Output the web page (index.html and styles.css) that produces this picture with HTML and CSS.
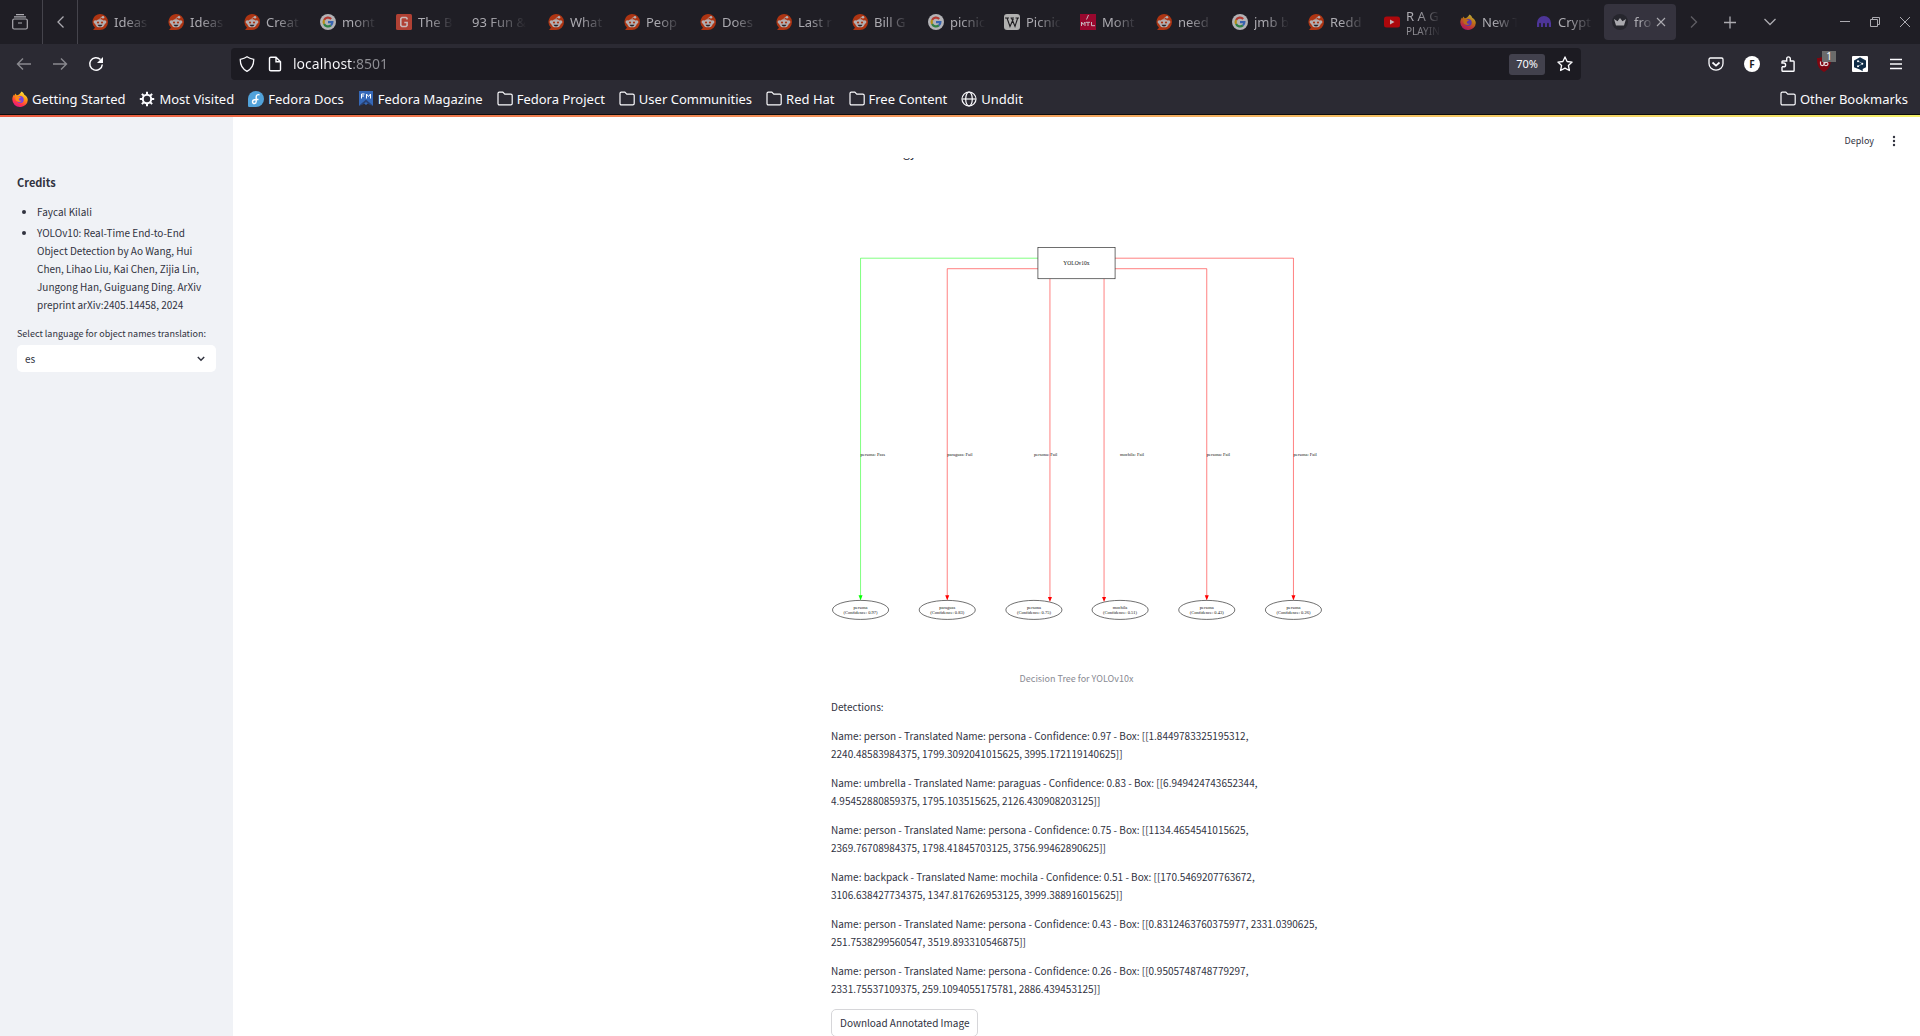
FILE: index.html
```html
<!DOCTYPE html>
<html lang="en">
<head>
<meta charset="utf-8">
<title>YOLOv10 Object Detection</title>
<link rel="stylesheet" href="styles.css">
</head>
<body>
<svg class="sprite" aria-hidden="true">
  <symbol id="reddit" viewBox="0 0 16 16">
    <path d="M8 0a8 8 0 1 1 0 16H1l2-2.200A8 8 0 0 1 8 0z" fill="#ad3412"/>
    <circle cx="3.300" cy="8" r="1.700" fill="#b4aeb0"/><circle cx="12.700" cy="8" r="1.700" fill="#b4aeb0"/>
    <ellipse cx="8" cy="9.300" rx="4.900" ry="4" fill="#b4aeb0"/>
    <circle cx="11" cy="3.300" r="1.300" fill="#b4aeb0"/>
    <path d="M8 5.500c0-1.500.8-2.200 2.200-2.200" fill="none" stroke="#b4aeb0" stroke-width=".8"/>
    <circle cx="6" cy="8.500" r="1.100" fill="#ad3412"/><circle cx="10" cy="8.500" r="1.100" fill="#ad3412"/>
    <path d="M5.600 10.700h4.800c-.4 1.200-1.200 1.700-2.400 1.700s-2-.5-2.400-1.700z" fill="#252329"/>
  </symbol>
  <symbol id="google" viewBox="0 0 16 16">
    <circle cx="8" cy="8" r="8" fill="#b3b3b6"/>
    <g fill="none" stroke-width="2.200">
      <path d="M11.200 4.900A4.400 4.400 0 0 0 4.100 6" stroke="#b23a31"/>
      <path d="M4.100 6a4.400 4.400 0 0 0 0 4" stroke="#b48d16"/>
      <path d="M4.100 10a4.400 4.400 0 0 0 6.800 1.400" stroke="#2f8044"/>
      <path d="M8 8.100h4.400c0 1.500-.5 2.500-1.500 3.300" stroke="#3764b0"/>
    </g>
  </symbol>
  <symbol id="firefox" viewBox="0 0 16 16">
    <path d="M9.500.5c1.700 1 2.400 2.200 2.800 3.200 2.100 1.200 3.500 3 3.500 5.200A7.400 7.400 0 0 1 8 16 7.600 7.600 0 0 1 .3 8.600C.3 6.500 1 4.800 2 3.500l.5 1.200.7-2.300L4.800 4.300C6.500 4.200 8.200 2.800 9.500.5z" fill="url(#flame)"/>
    <circle cx="8.200" cy="8.500" r="3.500" fill="#7542e5"/>
    <path d="M3.600 5.200c2.600-.5 4 .7 5.400 1.500-1.400.2-2.200.7-2.200 1.500 0 1.300 1.600 2 3.200 1.400-1 2-5.800 1.800-6.600-1.300z" fill="#ff8a17"/>
  </symbol>
  <linearGradient id="flame" x1=".8" y1="0" x2=".3" y2="1">
    <stop offset="0" stop-color="#fff44f"/><stop offset=".4" stop-color="#ff980e"/><stop offset=".75" stop-color="#ff3647"/><stop offset="1" stop-color="#e31587"/>
  </linearGradient>
  <symbol id="folder" viewBox="0 0 16 16">
    <path d="M1 12.500v-10C1 1.700 1.600 1.200 2.300 1.200h3.500l2 2h6c.8 0 1.400.6 1.400 1.300v8c0 .8-.6 1.300-1.400 1.300H2.300C1.600 13.800 1 13.300 1 12.500z" fill="none" stroke="currentColor" stroke-width="1.200"/>
  </symbol>
</svg>

<header class="browser">
  <div class="tabstrip">
    <button class="firefox-view" aria-label="Recent browsing"><svg class="icon16" viewBox="0 0 16 16" fill="none" stroke="currentColor" stroke-width="1.200"><rect x=".7" y="5" width="14.600" height="10" rx="1.500"/><path d="M2 2.800h12M4 .7h8M6 9h4"/></svg></button>
    <button class="tab-scroll" aria-label="Scroll tabs left"><svg class="icon16" viewBox="0 0 16 16" fill="none" stroke="currentColor" stroke-width="1.300"><path d="M11.500 2.500L6 8l5.500 5.500"/></svg></button>
    <nav class="tabs" aria-label="Tabs">
      <button class="tab"><svg class="icon16"><use href="#reddit"/></svg><span class="tab-text">Ideas</span></button>
      <button class="tab"><svg class="icon16"><use href="#reddit"/></svg><span class="tab-text">Ideas</span></button>
      <button class="tab"><svg class="icon16"><use href="#reddit"/></svg><span class="tab-text">Creat</span></button>
      <button class="tab"><svg class="icon16"><use href="#google"/></svg><span class="tab-text">mont</span></button>
      <button class="tab"><svg class="icon16" viewBox="0 0 16 16"><rect width="16" height="16" rx="1.500" fill="#b04134"/><path d="M11 5.500V4.400L10 3.500H6L4.800 4.700v6.600L6 12.500h4l1.100-1.100V8.500H8.300" fill="none" stroke="#c9b8b8" stroke-width="1.600"/></svg><span class="tab-text">The B</span></button>
      <button class="tab"><span class="tab-text tab-text-wide">93 Fun &amp;</span></button>
      <button class="tab"><svg class="icon16"><use href="#reddit"/></svg><span class="tab-text">What</span></button>
      <button class="tab"><svg class="icon16"><use href="#reddit"/></svg><span class="tab-text">Peop</span></button>
      <button class="tab"><svg class="icon16"><use href="#reddit"/></svg><span class="tab-text">Does</span></button>
      <button class="tab"><svg class="icon16"><use href="#reddit"/></svg><span class="tab-text">Last r</span></button>
      <button class="tab"><svg class="icon16"><use href="#reddit"/></svg><span class="tab-text">Bill G</span></button>
      <button class="tab"><svg class="icon16"><use href="#google"/></svg><span class="tab-text">picnic</span></button>
      <button class="tab"><svg class="icon16" viewBox="0 0 16 16"><rect width="16" height="16" rx="3" fill="#b0b0b0"/><path d="M1 4h4M6.500 4h3.500M11.500 4H15M3 4l3 8.500L9.300 5M7.500 4l3.500 8.500L13.700 4" fill="none" stroke="#1d1c20" stroke-width="1.100"/></svg><span class="tab-text">Picnic</span></button>
      <button class="tab"><svg class="icon16" viewBox="0 0 16 16"><rect width="16" height="16" fill="#98082e"/><path d="M8.500 1L6.500 5.500M1.500 12V8l1.800 2.500L5 8v4M6 8.300h4M8 8.300V12M11.500 8v3.700H15" fill="none" stroke="#c9b8c0" stroke-width="1"/></svg><span class="tab-text">Mont</span></button>
      <button class="tab"><svg class="icon16"><use href="#reddit"/></svg><span class="tab-text">need l</span></button>
      <button class="tab"><svg class="icon16"><use href="#google"/></svg><span class="tab-text">jmb b</span></button>
      <button class="tab"><svg class="icon16"><use href="#reddit"/></svg><span class="tab-text">Redd</span></button>
      <button class="tab"><svg class="icon16" viewBox="0 0 16 16"><rect y="2.500" width="16" height="11" rx="2.500" fill="#ad080c"/><path d="M6 5.500v5L10.500 8z" fill="#c4b4b8"/></svg><span class="tab-text">R A G<small class="playing">PLAYIN</small></span></button>
      <button class="tab"><svg class="icon16 dim"><use href="#firefox"/></svg><span class="tab-text">New T</span></button>
      <button class="tab"><svg class="icon16" viewBox="0 0 16 16"><path d="M1 13V9a7 7 0 0 1 14 0v4h-2.200V9.500a1 1 0 0 0-1.700 0V13H8.900V9.500a1 1 0 0 0-1.800 0V13H4.900V9.500a1 1 0 0 0-1.700 0V13z" fill="#4d3598"/></svg><span class="tab-text">Crypt</span></button>
      <button class="tab tab-current"><svg class="icon16" viewBox="0 0 16 16"><circle cx="8" cy="8" r="8" fill="#26262d"/><path d="M2 5l3.500 2.200L8 4l2.500 3.200L14 5l-2 6.500H4z" fill="#aaa9ae"/></svg><span class="tab-text tab-text-short">fro</span><svg class="tab-close" viewBox="0 0 10 10"><path d="M1 1l8 8M9 1L1 9" stroke="currentColor" stroke-width="1.100"/></svg></button>
    </nav>
    <button class="strip-button faint" aria-label="Scroll tabs right"><svg class="icon16" viewBox="0 0 16 16" fill="none" stroke="currentColor" stroke-width="1.300"><path d="M5 2.500L10.500 8 5 13.500"/></svg></button>
    <button class="strip-button" aria-label="New tab"><svg class="icon16" viewBox="0 0 16 16" stroke="currentColor" stroke-width="1.300"><path d="M2 8.500h12M8 2.500v12"/></svg></button>
    <button class="strip-button" aria-label="List all tabs"><svg class="icon16" viewBox="0 0 16 16" fill="none" stroke="currentColor" stroke-width="1.300"><path d="M2.500 5L8 10.500 13.500 5"/></svg></button>
    <div class="window-controls">
      <button aria-label="Minimize"><svg class="icon12" viewBox="0 0 12 12" stroke="currentColor"><path d="M1 5.500h10"/></svg></button>
      <button aria-label="Restore"><svg class="icon12" viewBox="0 0 12 12" fill="none" stroke="currentColor"><path d="M1.500 3.500h7v7h-7zM3.500 3V1.500h7v7H9"/></svg></button>
      <button aria-label="Close"><svg class="icon12" viewBox="0 0 12 12" stroke="currentColor"><path d="M1 1l10 10M11 1L1 11"/></svg></button>
    </div>
  </div>

  <div class="toolbar">
    <button class="tool faint" aria-label="Back"><svg class="icon16" viewBox="0 0 16 16" fill="none" stroke="currentColor" stroke-width="1.400"><path d="M15 8H1.500M7 2.500L1.500 8 7 13.500"/></svg></button>
    <button class="tool faint" aria-label="Forward"><svg class="icon16" viewBox="0 0 16 16" fill="none" stroke="currentColor" stroke-width="1.400"><path d="M1 8h13.500M9 2.500L14.500 8 9 13.500"/></svg></button>
    <button class="tool" aria-label="Reload"><svg class="icon16" viewBox="0 0 16 16"><path d="M12.500 3.500A6.300 6.300 0 1 0 14.300 8.500" fill="none" stroke="currentColor" stroke-width="1.500"/><path d="M15 1v6H9z" fill="currentColor"/></svg></button>
    <div class="urlbar">
      <svg class="icon16" viewBox="0 0 16 16" fill="none" stroke="currentColor" stroke-width="1.300"><path d="M8 .8C6 2.300 3.800 2.900 1.300 3.300c-.2 5.200 1.700 9.500 6.700 12 5-2.500 6.900-6.800 6.700-12C12.200 2.900 10 2.300 8 .8z"/></svg>
      <svg class="icon16" viewBox="0 0 16 16" fill="none" stroke="currentColor" stroke-width="1.400"><path d="M2.500 13.500v-11c0-.8.500-1.300 1.300-1.300H9l4.500 4.500v7.800c0 .8-.5 1.300-1.300 1.300H3.800c-.8 0-1.300-.5-1.300-1.300zM9 1.500v4.200h4.500"/></svg>
      <input class="url" type="text" value="localhost:8501" aria-label="Address">
      <button class="zoom-level">70%</button>
      <svg class="icon16" viewBox="0 0 16 16" fill="none" stroke="currentColor" stroke-width="1.300" stroke-linejoin="round"><path d="M8 .9l2.100 4.600 5 .6-3.700 3.400 1 5L8 12.100l-4.400 2.400 1-5L.9 6.100l5-.6z"/></svg>
    </div>
    <div class="extensions">
      <button class="tool" aria-label="Pocket"><svg class="icon16" viewBox="0 0 16 16" fill="none" stroke="currentColor" stroke-width="1.300"><path d="M1 3.500C1 2.700 1.600 2 2.400 2h11.200c.8 0 1.400.7 1.400 1.500V7.500a7 6.700 0 0 1-14 0z"/><path d="M4.500 6.500L8 9.700l3.500-3.200" stroke-width="1.700"/></svg></button>
      <button class="tool" aria-label="Account"><span class="avatar">F</span></button>
      <button class="tool" aria-label="Extensions"><svg class="icon16" viewBox="0 0 16 16" fill="none" stroke="currentColor" stroke-width="1.400"><path d="M2 10.800V14.500c0 .5.300.8.800.8h10.500c.5 0 .8-.3.800-.8V5.800c0-.5-.3-.8-.8-.8H10.300V2.700a1.800 1.800 0 0 0-3.600 0V5H2.800c-.5 0-.8.300-.8.800V7h1.700a1.900 1.900 0 0 1 0 3.800H2"/></svg></button>
      <button class="tool tool-badged" aria-label="Content blocker"><svg class="icon16" viewBox="0 0 16 16"><path d="M8 0c2 1.500 4.500 2 7 2 0 7-1.500 11-7 14C2.500 13 1 9 1 2c2.500 0 5-.5 7-2z" fill="#800610"/><path d="M4.500 5.500v2.600c0 2 3.500 2 3.500 0V5.500v2.600c0 2 4 2 4 0S9.200 5.800 8.500 7.500" fill="none" stroke="#e8dcdc" stroke-width="1.200"/></svg><span class="badge">1</span></button>
      <button class="tool" aria-label="Translate"><svg class="icon16" viewBox="0 0 16 16"><rect width="16" height="16" rx="1" fill="#fff"/><path d="M8 1.200l6 3.300v6.800L10.700 13v2.200L7.800 13.500 2 11.300V4.500z" fill="#0f2b46"/><path d="M6 5l4.500 2.700L6 10.300" fill="none" stroke="#8fa3b4" stroke-width=".8"/><circle cx="6" cy="5.200" r="1" fill="#fff"/><circle cx="10.300" cy="7.700" r="1" fill="#fff"/><circle cx="6" cy="10.200" r="1" fill="#fff"/></svg></button>
      <button class="tool" aria-label="Menu"><svg class="icon16" viewBox="0 0 16 16" stroke="currentColor" stroke-width="1.300"><path d="M2 3.500h12M2 8h12M2 12.500h12"/></svg></button>
    </div>
  </div>

  <nav class="bookmarks" aria-label="Bookmarks">
    <a href="#"><svg class="icon16"><use href="#firefox"/></svg>Getting Started</a>
    <a href="#"><svg class="icon16" viewBox="0 0 16 16" fill="none" stroke="currentColor"><circle cx="8" cy="8" r="4.200" stroke-width="2"/><path d="M8 .8v3M8 12.200v3M.8 8h3M12.200 8h3M2.900 2.900L5 5M11 11l2.100 2.100M2.900 13.100L5 11M11 5l2.100-2.100" stroke-width="2"/></svg>Most Visited</a>
    <a href="#"><svg class="icon16" viewBox="0 0 16 16"><path d="M8 0a8 8 0 1 1 0 16H1.500C.5 16 0 15.500 0 14.500V8a8 8 0 0 1 8-8z" fill="#51a2da"/><path d="M11.500 3.800C9.500 3.200 8.200 4.200 8.200 6v4.500c0 2.500-3.700 2.700-3.700.3 0-1.800 1.500-2.300 3.700-2.300h2.300" fill="none" stroke="#fff" stroke-width="1.400"/></svg>Fedora Docs</a>
    <a href="#"><svg class="icon16" viewBox="0 0 16 16"><path d="M1 0h14v15l-4-3.500L8 14l-3-2.500L1 15z" fill="#3568b8"/><path d="M1 15l7-6.500 7 6.500-4-1.500L8 11l-3 2.500z" fill="#294172"/><path d="M3.500 7.500V3H6.500M3.500 5H6M8.500 7.500V3l2 2.500 2-2.500v4.500" fill="none" stroke="#fff"/></svg>Fedora Magazine</a>
    <a href="#"><svg class="icon16"><use href="#folder"/></svg>Fedora Project</a>
    <a href="#"><svg class="icon16"><use href="#folder"/></svg>User Communities</a>
    <a href="#"><svg class="icon16"><use href="#folder"/></svg>Red Hat</a>
    <a href="#"><svg class="icon16"><use href="#folder"/></svg>Free Content</a>
    <a href="#"><svg class="icon16" viewBox="0 0 16 16" fill="none" stroke="currentColor" stroke-width="1.200"><circle cx="8" cy="8" r="7"/><ellipse cx="8" cy="8" rx="3.300" ry="7"/><path d="M1.500 8h13"/></svg>Unddit</a>
    <a class="other" href="#"><svg class="icon16"><use href="#folder"/></svg>Other Bookmarks</a>
  </nav>
</header>

<div class="app">
  <aside class="sidebar">
    <h2>Credits</h2>
    <ul>
      <li>Faycal Kilali</li>
      <li>YOLOv10: Real-Time End-to-End Object Detection by Ao Wang, Hui Chen, Lihao Liu, Kai Chen, Zijia Lin, Jungong Han, Guiguang Ding. ArXiv preprint arXiv:2405.14458, 2024</li>
    </ul>
    <label for="language">Select language for object names translation:</label>
    <div class="select-box">
      <select id="language"><option>es</option></select>
      <svg class="select-arrow" viewBox="0 0 8 6" fill="none" stroke="#31333f" stroke-width="1.500"><path d="M.8 1L4 4.200 7.200 1"/></svg>
    </div>
  </aside>

  <div class="page">
    <header class="app-header">
      <button class="deploy">Deploy</button>
      <button class="kebab" aria-label="Main menu"><svg class="icon12" viewBox="0 0 12 12" fill="#31333f"><circle cx="6" cy="2" r="1.200"/><circle cx="6" cy="6" r="1.200"/><circle cx="6" cy="10" r="1.200"/></svg></button>
    </header>
    <main class="content">
      <p class="scrolled-line">gy</p>
      <figure>
        <svg class="tree" viewBox="0 0 980 1000" role="img" aria-label="Decision Tree for YOLOv10x">
          <g fill="none" stroke="#0f0"><path d="M413 186H59V860"/></g>
          <g fill="none" stroke="#f00">
            <path d="M413 207H232V860"/><path d="M437 227V863"/><path d="M545 227V863"/><path d="M567 207H750V860"/><path d="M567 186H923V860"/>
          </g>
          <path d="M55 859h8l-4 10z" fill="#0f0"/>
          <path d="M228 859h8l-4 10zM433 862h8l-4 10zM541 862h8l-4 10zM746 859h8l-4 10zM919 859h8l-4 10z" fill="#f00"/>
          <rect class="node" x="413" y="165" width="154" height="62"/>
          <text class="root-text" x="490" y="200">YOLOv10x</text>
          <g class="node">
            <ellipse cx="59" cy="888" rx="56" ry="19"/><ellipse cx="232" cy="888" rx="56" ry="19"/><ellipse cx="405" cy="888" rx="56" ry="19"/><ellipse cx="577" cy="888" rx="56" ry="19"/><ellipse cx="750" cy="888" rx="56" ry="19"/><ellipse cx="923" cy="888" rx="56" ry="19"/>
          </g>
          <g class="edge-text">
            <text x="59" y="581">persona: Pass</text><text x="232" y="581">paraguas: Fail</text><text x="405" y="581">persona: Fail</text><text x="577" y="581">mochila: Fail</text><text x="750" y="581">persona: Fail</text><text x="923" y="581">persona: Fail</text>
          </g>
          <g class="node-text">
            <text x="59" y="887">persona</text><text x="59" y="897">(Confidence: 0.97)</text>
            <text x="232" y="887">paraguas</text><text x="232" y="897">(Confidence: 0.83)</text>
            <text x="405" y="887">persona</text><text x="405" y="897">(Confidence: 0.75)</text>
            <text x="577" y="887">mochila</text><text x="577" y="897">(Confidence: 0.51)</text>
            <text x="750" y="887">persona</text><text x="750" y="897">(Confidence: 0.43)</text>
            <text x="923" y="887">persona</text><text x="923" y="897">(Confidence: 0.26)</text>
          </g>
        </svg>
        <figcaption>Decision Tree for YOLOv10x</figcaption>
      </figure>
      <p>Detections:</p>
      <p>Name: person - Translated Name: persona - Confidence: 0.97 - Box: [[1.8449783325195312, 2240.48583984375, 1799.3092041015625, 3995.172119140625]]</p>
      <p>Name: umbrella - Translated Name: paraguas - Confidence: 0.83 - Box: [[6.949424743652344, 4.95452880859375, 1795.103515625, 2126.430908203125]]</p>
      <p>Name: person - Translated Name: persona - Confidence: 0.75 - Box: [[1134.4654541015625, 2369.76708984375, 1798.41845703125, 3756.99462890625]]</p>
      <p>Name: backpack - Translated Name: mochila - Confidence: 0.51 - Box: [[170.5469207763672, 3106.638427734375, 1347.817626953125, 3999.388916015625]]</p>
      <p>Name: person - Translated Name: persona - Confidence: 0.43 - Box: [[0.8312463760375977, 2331.0390625, 251.7538299560547, 3519.893310546875]]</p>
      <p>Name: person - Translated Name: persona - Confidence: 0.26 - Box: [[0.9505748748779297, 2331.75537109375, 259.1094055175781, 2886.439453125]]</p>
      <button class="download">Download Annotated Image</button>
    </main>
  </div>
</div>
</body>
</html>
```
FILE: styles.css
```css
* { box-sizing: border-box; }
body {
  margin: 0;
  height: 100vh;
  display: flex;
  flex-direction: column;
  overflow: hidden;
  background: #fff;
  color: #31333f;
  font: 10px/18px "Noto Sans CJK SC", sans-serif;
}
button, input, select { font: inherit; color: inherit; border: 0; padding: 0; background: none; }
svg { display: block; flex: none; }
.sprite { position: absolute; width: 0; height: 0; }
.icon16 { width: 16px; height: 16px; }
.icon12 { width: 12px; height: 12px; }
.faint { opacity: .45; }
.dim { opacity: .7; }

/* Browser chrome */
.browser {
  flex: none;
  color: #fbfbfe;
  background: #2b2a33;
  font: 13px/18px "Noto Sans", sans-serif;
}
.browser::after {
  content: "";
  display: block;
  height: 2px;
  border-top: 1px solid #0c0c0d;
  background: linear-gradient(90deg, #e8583e, #f29a5c 50%, #f5f06a);
}
.tabstrip { display: flex; align-items: stretch; height: 44px; background: #1f1e25; color: #acabb1; }
.tabstrip button { display: flex; align-items: center; }
.firefox-view { width: 43px; padding-left: 12px; border-right: 1px solid #45444c; }
.tab-scroll { width: 35px; justify-content: center; border-right: 1px solid #45444c; }
.tabs { display: flex; padding-left: 4px; }
.tabs .tab { width: 72px; margin: 4px 2px; padding-left: 8px; gap: 6px; text-align: left; border-radius: 4px; }
.tab-text {
  width: 36px;
  overflow: hidden;
  white-space: nowrap;
  -webkit-mask-image: linear-gradient(90deg, #000 30%, transparent 98%);
  mask-image: linear-gradient(90deg, #000 30%, transparent 98%);
}
.tab-text-wide { width: 56px; }
.tab-text-short { width: 20px; margin-right: -4px; }
.playing { display: block; font-size: 10px; line-height: 12px; opacity: .8; }
.tabs .tab-current { background: #35333e; }
.tab-close { width: 10px; height: 10px; }
.strip-button { width: 40px; justify-content: center; }
.tabstrip > .faint { width: 32px; }
.window-controls { display: flex; margin-left: auto; }
.window-controls button { width: 30px; justify-content: center; }

.toolbar { display: flex; align-items: center; height: 36px; padding: 4px 6px 0; }
.tool { display: flex; align-items: center; justify-content: center; width: 36px; height: 32px; }
.urlbar {
  flex: 1;
  display: flex;
  align-items: center;
  gap: 12px;
  height: 32px;
  margin: 0 117px;
  padding: 0 8px;
  border-radius: 4px;
  background: #1c1b22;
}
.url {
  flex: 1;
  min-width: 0;
  margin-left: -2px;
  font-size: 14px;
  outline: 0;
  color: transparent;
  background: linear-gradient(90deg, #fbfbfe 59px, #8f8f95 59px);
  -webkit-background-clip: text;
  background-clip: text;
}
.zoom-level { width: 36px; height: 21px; border-radius: 3px; background: #42414d; font-size: 11px; }
.extensions { display: flex; }
.avatar {
  width: 16px;
  border-radius: 8px;
  background: #fff;
  color: #1c1b22;
  font: bold 10px/16px "Noto Sans", sans-serif;
}
.tool-badged { position: relative; }
.badge {
  position: absolute;
  top: 3px;
  right: 6px;
  width: 14px;
  background: #6b6b6b;
  font-size: 10px;
  line-height: 11px;
}

.bookmarks { display: flex; align-items: center; height: 34px; padding: 4px 12px 0; gap: 14px; }
.bookmarks a { display: flex; align-items: center; gap: 4px; color: inherit; text-decoration: none; white-space: nowrap; }
.bookmarks .other { margin-left: auto; }

/* App */
.app { flex: 1; min-height: 0; display: flex; }
.sidebar { width: 233px; padding: 56px 17px 0; background: #f0f2f6; }
.sidebar h2 { margin: 0 0 12px; font-size: 11px; line-height: 18px; font-weight: bold; }
.sidebar ul { margin: 0 0 13px; padding-left: 20px; }
.sidebar li { margin-bottom: 3px; }
.sidebar label { display: block; margin-bottom: 4px; font-size: 9px; line-height: 14px; }
.select-box { display: grid; align-items: center; }
.select-box > * { grid-area: 1 / 1; }
#language { width: 100%; height: 27px; padding: 0 8px; border-radius: 5px; background: #fff; appearance: none; }
.select-arrow { width: 8px; height: 6px; margin-right: 11px; justify-self: end; pointer-events: none; }

.page { flex: 1; min-width: 0; display: flex; flex-direction: column; }
.app-header { flex: none; display: flex; align-items: center; justify-content: flex-end; gap: 14px; height: 41px; padding: 7px 20px 0 0; }
.deploy { font-size: 9px; line-height: 14px; }
.content { flex: 1; min-height: 0; overflow: hidden; width: 100%; max-width: 491px; margin: 0 auto; }
.content p { margin: 0 0 11px; }
.content .scrolled-line { display: flex; align-items: flex-end; height: 3px; margin: 0 0 4px; padding-left: 72px; overflow: hidden; font-size: 12px; }
figure { margin: 0 0 12px; }
.tree { width: 100%; }
.node { fill: none; stroke: #222; stroke-width: 1.3; }
rect.node { fill: #fff; }
.tree text { fill: #111; font-family: "Liberation Serif", serif; font-size: 9px; }
.tree .root-text { font-size: 11px; text-anchor: middle; }
.node-text { text-anchor: middle; }
figcaption { margin-top: 6px; font-size: 9px; line-height: 14px; text-align: center; color: #898a92; }
.download { display: block; height: 28px; padding: 0 8px; border: 1px solid #d6d6d9; border-radius: 5px; background: #fff; }
```
